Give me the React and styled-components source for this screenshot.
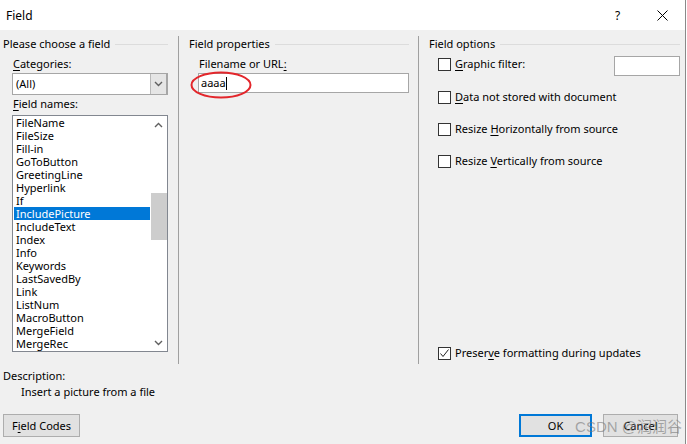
import React from 'react';
import styled, { createGlobalStyle } from 'styled-components';

const GlobalStyle = createGlobalStyle`
  html, body {
    margin: 0;
    padding: 0;
    background: #fff;
  }
  body {
    font-family: "Noto Sans", "Liberation Sans", sans-serif;
    font-size: 11px;
    color: #000;
  }
  * { box-sizing: border-box; }
  u { text-decoration-thickness: 1px; text-underline-offset: 2px; }
`;

const fieldNames = [
    'FileName', 'FileSize', 'Fill-in', 'GoToButton', 'GreetingLine', 'Hyperlink', 'If',
    'IncludePicture', 'IncludeText', 'Index', 'Info', 'Keywords', 'LastSavedBy', 'Link',
    'ListNum', 'MacroButton', 'MergeField', 'MergeRec',
];

const Chevron = ({ down }) => (
    <svg width="9" height="6" viewBox="0 0 9 6">
        <polyline
            points={down ? '1,1 4.5,4.5 8,1' : '1,5 4.5,1.5 8,5'}
            fill="none"
            stroke="#606060"
            strokeWidth="1.4"
        />
    </svg>
);

const App = () => {
    return (
        <>
            <GlobalStyle />
            <Dialog>
                <TitleBar>
                    <span>Field</span>
                    <TitleButtons>
                        <TitleButton>?</TitleButton>
                        <TitleButton>
                            <svg width="11" height="11" viewBox="0 0 11 11">
                                <path d="M0.5 0.5 L10.5 10.5 M10.5 0.5 L0.5 10.5" stroke="#000" strokeWidth="1" />
                            </svg>
                        </TitleButton>
                    </TitleButtons>
                </TitleBar>
                <Body>
                    <Columns>
                        <LeftCol>
                            <GroupHeader>Please choose a field</GroupHeader>
                            <Label><u>C</u>ategories:</Label>
                            <Combo>
                                <ComboText>(All)</ComboText>
                                <DropButton><Chevron down /></DropButton>
                            </Combo>
                            <Label $tight><u>F</u>ield names:</Label>
                            <ListBox>
                                <Items>
                                    {fieldNames.map((n) => (
                                        <Item key={n} $selected={n === 'IncludePicture'}>{n}</Item>
                                    ))}
                                </Items>
                                <ScrollBar>
                                    <ScrollArrow><Chevron /></ScrollArrow>
                                    <Track>
                                        <Thumb />
                                    </Track>
                                    <ScrollArrow><Chevron down /></ScrollArrow>
                                </ScrollBar>
                            </ListBox>
                        </LeftCol>
                        <Separator />
                        <MidCol>
                            <GroupHeader>Field properties</GroupHeader>
                            <Label>Filename or URL<u>:</u></Label>
                            <InputWrap>
                                <TextInput $width={211}>
                                    aaaa<Caret />
                                </TextInput>
                                <Ellipse width="62" height="28" viewBox="0 0 62 28">
                                    <ellipse cx="31" cy="14" rx="29.5" ry="12.5" fill="none" stroke="#e3262b" strokeWidth="2" />
                                </Ellipse>
                            </InputWrap>
                        </MidCol>
                        <Separator />
                        <RightCol>
                            <GroupHeader>Field options</GroupHeader>
                            <Options>
                                <OptionRow>
                                    <CheckBox />
                                    <span><u>G</u>raphic filter:</span>
                                    <FilterInput />
                                </OptionRow>
                                <OptionRow $extra={1}>
                                    <CheckBox />
                                    <span><u>D</u>ata not stored with document</span>
                                </OptionRow>
                                <OptionRow>
                                    <CheckBox />
                                    <span>Resize <u>H</u>orizontally from source</span>
                                </OptionRow>
                                <OptionRow>
                                    <CheckBox />
                                    <span>Resize <u>V</u>ertically from source</span>
                                </OptionRow>
                            </Options>
                            <OptionRow $bottom>
                                <CheckBox>
                                    <svg width="11" height="11" viewBox="0 0 11 11">
                                        <polyline points="1.5,5.5 4,8.5 9.5,1.5" fill="none" stroke="#222" strokeWidth="1" />
                                    </svg>
                                </CheckBox>
                                <span>Preser<u>v</u>e formatting during updates</span>
                            </OptionRow>
                        </RightCol>
                    </Columns>
                    <Footer>
                        <FooterLabel>Description:</FooterLabel>
                        <DescText>Insert a picture from a file</DescText>
                        <ButtonRow>
                            <Button $width={77}>F<u>i</u>eld Codes</Button>
                            <ButtonGroup>
                                <Button $width={73} $default>OK</Button>
                                <Button $width={75}>Cancel</Button>
                            </ButtonGroup>
                        </ButtonRow>
                    </Footer>
                    <Watermark>CSDN @润润谷</Watermark>
                </Body>
            </Dialog>
        </>
    );
};

export default App;

const Dialog = styled.div`
    position: relative;
    width: 686px;
    height: 444px;
    display: flex;
    flex-direction: column;
    border-right: 1px solid #8a8a8a;
`;

const TitleBar = styled.div`
    height: 30px;
    flex-shrink: 0;
    background: #fff;
    display: flex;
    align-items: center;
    padding-left: 6px;
    font-size: 12px;
`;

const TitleButtons = styled.div`
    margin-left: auto;
    display: flex;
    height: 100%;
`;

const TitleButton = styled.div`
    width: 45px;
    height: 100%;
    display: flex;
    align-items: center;
    justify-content: center;
    font-size: 12px;
`;

const Body = styled.div`
    flex: 1;
    background: #f0f0f0;
    display: flex;
    flex-direction: column;
`;

const Columns = styled.div`
    display: flex;
    height: 335px;
`;

const Separator = styled.div`
    width: 1px;
    margin: 6px 0 1px;
    background: #a0a0a0;
`;

const LeftCol = styled.div`
    width: 178px;
    padding: 7px 10px 0 3px;
    display: flex;
    flex-direction: column;
`;

const MidCol = styled.div`
    width: 239px;
    padding: 7px 9px 0 10px;
    display: flex;
    flex-direction: column;
`;

const RightCol = styled.div`
    flex: 1;
    padding: 7px 5px 5px 10px;
    display: flex;
    flex-direction: column;
`;

const GroupHeader = styled.div`
    display: flex;
    align-items: center;
    gap: 5px;
    height: 14px;
    line-height: 14px;
    white-space: nowrap;
    &::after {
        content: '';
        flex: 1;
        height: 1px;
        background: #dcdcdc;
    }
`;

const Label = styled.div`
    margin: ${(p) => (p.$tight ? '2px' : '6px')} 0 0 10px;
    height: 14px;
    line-height: 14px;
`;

const Combo = styled.div`
    margin: 2px 0 0 9px;
    width: 156px;
    height: 22px;
    border: 1px solid #a6a6a6;
    background: #fff;
    display: flex;
`;

const ComboText = styled.div`
    flex: 1;
    padding-left: 3px;
    line-height: 20px;
`;

const DropButton = styled.div`
    width: 17px;
    background: #e5e5e5;
    border-left: 1px solid #b9b9b9;
    border-right: 1px solid #a6a6a6;
    display: flex;
    align-items: center;
    justify-content: center;
`;

const ListBox = styled.div`
    margin: 4px 0 0 9px;
    width: 156px;
    height: 237px;
    border: 1px solid #828790;
    background: #fff;
    display: flex;
`;

const Items = styled.div`
    flex: 1;
    padding-left: 1px;
`;

const Item = styled.div`
    height: 13px;
    line-height: 13px;
    padding-left: 2px;
    white-space: nowrap;
    background: ${(p) => (p.$selected ? '#0078d7' : 'transparent')};
    color: ${(p) => (p.$selected ? '#fff' : '#000')};
`;

const ScrollBar = styled.div`
    width: 17px;
    display: flex;
    flex-direction: column;
    background: #fff;
`;

const ScrollArrow = styled.div`
    height: 17px;
    display: flex;
    align-items: center;
    justify-content: center;
`;

const Track = styled.div`
    flex: 1;
    padding-top: 60px;
`;

const Thumb = styled.div`
    margin-left: 1px;
    height: 47px;
    background: #cdcdcd;
`;

const InputWrap = styled.div`
    position: relative;
    margin: 2px 0 0 9px;
`;

const TextInput = styled.div`
    width: ${(p) => p.$width}px;
    height: 20px;
    border: 1px solid #a6a6a6;
    background: #fff;
    padding-left: 2px;
    line-height: 18px;
    display: flex;
    align-items: center;
`;

const Caret = styled.span`
    display: inline-block;
    width: 1px;
    height: 13px;
    background: #000;
`;

const Ellipse = styled.svg`
    position: absolute;
    left: -8px;
    top: -2px;
`;

const Options = styled.div`
    display: flex;
    flex-direction: column;
    gap: 18px;
    margin-top: 6px;
`;

const OptionRow = styled.div`
    display: flex;
    align-items: flex-start;
    height: 14px;
    line-height: 14px;
    white-space: nowrap;
    margin-top: ${(p) => (p.$bottom ? 'auto' : `${p.$extra || 0}px`)};
`;

const CheckBox = styled.div`
    width: 13px;
    height: 13px;
    margin: 1px 4px 0 9px;
    border: 1px solid #333;
    background: #fff;
    display: flex;
    align-items: center;
    justify-content: center;
    flex-shrink: 0;
`;

const FilterInput = styled.div`
    margin-left: auto;
    margin-top: -1px;
    width: 66px;
    height: 20px;
    border: 1px solid #a6a6a6;
    background: #fff;
`;

const Footer = styled.div`
    padding: 4px 7px 0 3px;
    display: flex;
    flex-direction: column;
`;

const FooterLabel = styled.div`
    height: 14px;
    line-height: 14px;
`;

const DescText = styled.div`
    margin-top: 2px;
    padding-left: 18px;
    height: 14px;
    line-height: 14px;
`;

const ButtonRow = styled.div`
    margin-top: 15px;
    display: flex;
    justify-content: space-between;
`;

const ButtonGroup = styled.div`
    display: flex;
    gap: 11px;
`;

const Button = styled.div`
    width: ${(p) => p.$width}px;
    height: 23px;
    background: #e1e1e1;
    border: ${(p) => (p.$default ? '2px solid #0078d7' : '1px solid #adadad')};
    display: flex;
    align-items: center;
    justify-content: center;
`;

const Watermark = styled.div`
    position: absolute;
    right: 3px;
    bottom: 8px;
    font-family: "Liberation Sans", "Noto Sans CJK SC", sans-serif;
    font-size: 15px;
    color: rgba(120, 120, 120, 0.6);
    pointer-events: none;
`;
